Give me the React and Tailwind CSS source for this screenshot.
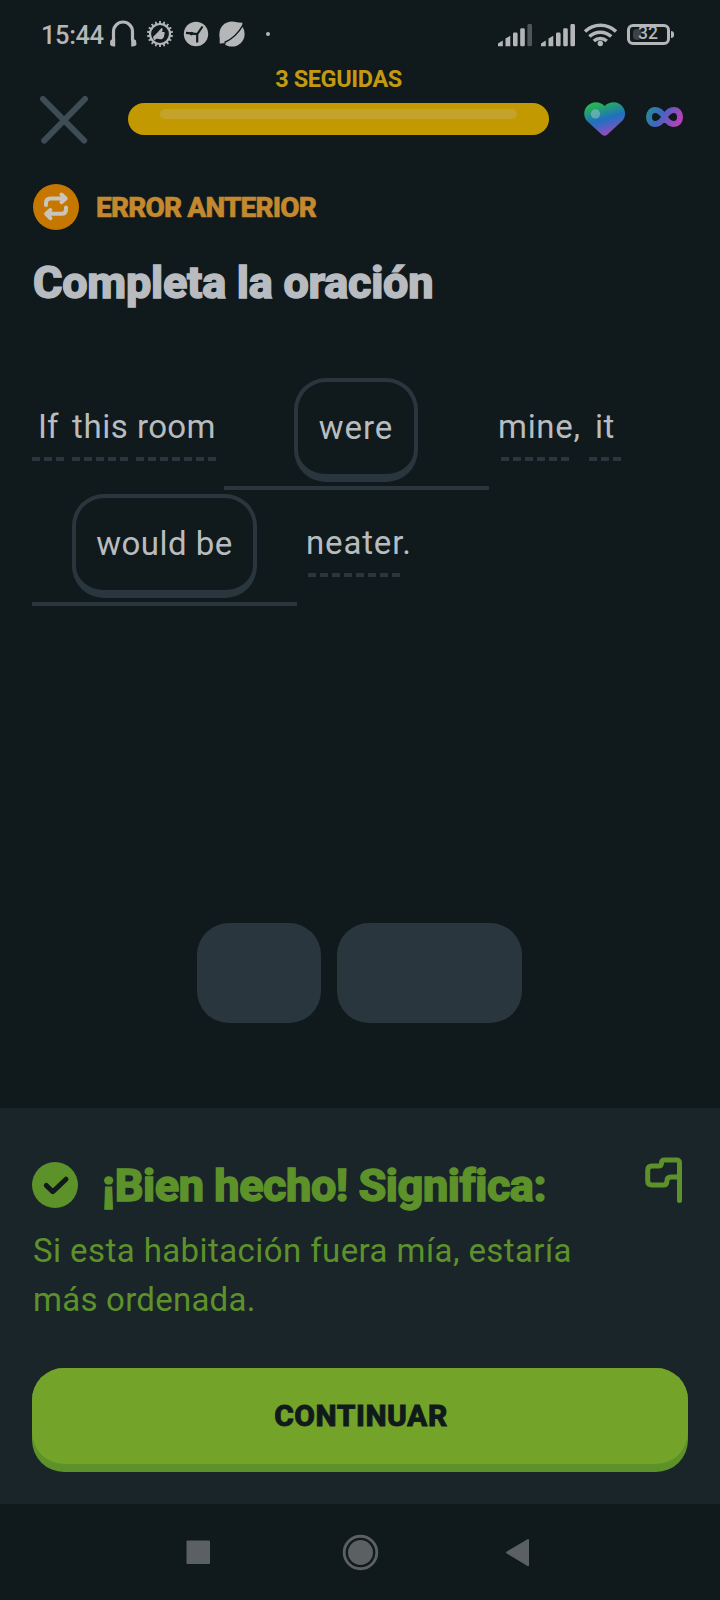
import React from 'react';

const GREY = '#b4b6b8';

function Dashes({ className }) {
  return (
    <div
      className={`h-1 bg-[repeating-linear-gradient(90deg,#2a363e_0_8px,transparent_8px_12px)] ${className}`}
    />
  );
}

function Word({ children, box, text, dashes }) {
  return (
    <div className={`flex flex-col pt-[29px] ${box}`}>
      <span className={`whitespace-nowrap text-[33px] leading-10 text-[#b8bcbf] ${text}`}>{children}</span>
      {dashes && <Dashes className={`mt-2.5 ${dashes}`} />}
    </div>
  );
}

function Slot({ children, chip }) {
  return (
    <div className="flex h-28 w-[265px] flex-col items-center border-b-4 border-[#2a363e]">
      <div className={`flex h-[104px] shrink-0 justify-center rounded-[32px] border-4 border-b-8 border-[#2a363e] pt-[26px] ${chip}`}>
        <span className="whitespace-nowrap text-[33px] leading-10 text-[#b8bcbf]">{children}</span>
      </div>
    </div>
  );
}

function Gear() {
  const teeth = Array.from({ length: 18 }, (_, i) => i * 20);
  return (
    <svg className="ml-2 size-7 shrink-0" viewBox="-14 -14 28 28">
      <circle r="10" fill="none" stroke={GREY} strokeWidth="2.2" />
      {teeth.map((a) => (
        <rect key={a} x="-0.9" y="-13" width="1.8" height="3" fill={GREY} transform={`rotate(${a})`} />
      ))}
      <path d="M-7 3 L-3 -1 L1.500 -6 Q3 -6.500 2.500 -3.500 L2 -2 H4.500 Q5 0 4.200 1 Q4.500 4 2.500 4.800 Q0 6 -3 4.500 L-6 6.500 Z" fill={GREY} />
    </svg>
  );
}

function Signal({ last, className }) {
  return (
    <svg className={`h-6 w-[35px] shrink-0 ${className}`} viewBox="0 0 35 24" fill={GREY}>
      <path d="M0 23.2V20.5L4.8 17.5V23.2Z" />
      <path d="M7.5 23.2V15.5L12.3 12.8V23.2Z" />
      <rect x="15" y="9.5" width="4.6" height="13.8" rx="1.4" />
      <rect x="22.2" y="5.3" width="4.6" height="18" rx="1.4" />
      <rect x="29.4" y="1" width="4.6" height="22.3" rx="1.4" fill={last} />
    </svg>
  );
}

function StatusBar() {
  return (
    <div className="flex h-[68px] items-center pl-[41px]">
      <span className="w-[67px] whitespace-nowrap pt-0.5 text-[25.5px] font-medium leading-7 tracking-[-0.4px] text-[#b4b6b8]">15:44</span>
      <svg className="h-7 w-[30px] shrink-0" viewBox="108 20 30 28" fill="none" stroke={GREY} strokeLinecap="round">
        <path d="M113.500 40V31.500a9.500 9.500 0 0 1 19 0V40" strokeWidth="3.2" />
        <path d="M110.300 40.500Q112 38.500 115.200 38.800V46.500Q111 47 110 44.500ZM136 40.500Q134.500 38.500 131.200 38.800V46.500Q135.500 47 136.500 44.500Z" fill={GREY} stroke="none" />
      </svg>
      <Gear />
      <svg className="ml-2 size-7 shrink-0" viewBox="-14 -14 28 28">
        <circle r="12.2" fill={GREY} />
        <path d="M-10-1.2L1.5 0.2M1 0.5L6.5-7.5M1.2 0V8.6" stroke="#10191b" strokeWidth="2.2" fill="none" />
        <circle cx="-4.5" cy="-0.4" r="1.8" fill="#10191b" />
      </svg>
      <svg className="ml-2 size-7 shrink-0" viewBox="-14 -14 28 28">
        <circle r="12.6" fill={GREY} />
        <path d="M-12.300 0V9.500H-6ZM0-12L10.500-11.300L9.500-5Z" fill={GREY} />
        <path d="M-7.500 8.500Q4 3.500 11-9" stroke="#10191b" strokeWidth="1.500" fill="none" />
        <path d="M-10.500 9.800L-6 8.800L-7.500 11.500Z" fill="#10191b" />
      </svg>
      <div className="ml-5 size-1 rounded-full bg-[#b4b6b8]" />
      <Signal last="#4f5558" className="ml-[228px] mt-0.5" />
      <Signal last={GREY} className="ml-2 mt-0.5" />
      <svg className="ml-[7px] h-7 w-[34px] shrink-0" viewBox="583 20 34 28" fill="none" stroke={GREY} strokeWidth="3.5">
        <path d="M585 31.500A22.400 22.400 0 0 1 616 31.500" />
        <path d="M589.4 36.500A15.8 15.8 0 0 1 611.2 36.500" />
        <path d="M593.8 41A9.6 9.6 0 0 1 606.8 41" />
        <circle cx="600.3" cy="43.500" r="2.7" fill={GREY} stroke="none" />
      </svg>
      <div className="ml-[10px] flex h-[21px] w-[43px] shrink-0 items-center rounded-[6px] border-[3px] border-[#b4b6b8] pl-[3px]">
        <div className="flex h-[11px] w-2 items-center rounded-sm bg-[#3c4245]">
          <span className="ml-[5px] text-[17.5px] font-medium leading-none text-[#b4b6b8]">32</span>
        </div>
      </div>
      <div className="ml-px h-[7px] w-[3px] rounded-r bg-[#b4b6b8]" />
    </div>
  );
}

function ProgressHeader() {
  return (
    <div className="flex h-[116px] pl-10">
      <svg className="mt-7 size-12 shrink-0" viewBox="0 0 48 48" stroke="#3e4c55" strokeWidth="6" strokeLinecap="round">
        <path d="M3 3L44.2 44.6M45 3L4.2 44.6" />
      </svg>
      <div className="ml-10 flex w-[421px] shrink-0 flex-col">
        <div className="flex h-[35px] items-start justify-center">
          <span className="-mt-px whitespace-nowrap text-[23.5px] font-bold leading-6 tracking-[-0.4px] text-[#c29a12]">3 SEGUIDAS</span>
        </div>
        <div className="h-8 rounded-2xl bg-[#c29900] px-8 pt-1.5">
          <div className="h-[10px] rounded-full bg-[#c5a229]" />
        </div>
      </div>
      <svg className="ml-[35px] mt-8 h-10 w-[42px] shrink-0" viewBox="584 100 42 40">
        <defs>
          <linearGradient id="heart" x1="0.3" y1="0" x2="0.65" y2="1">
            <stop offset="0.05" stopColor="#27b552" />
            <stop offset="0.5" stopColor="#2070bf" />
            <stop offset="0.62" stopColor="#3a68c0" />
            <stop offset="1" stopColor="#a846bd" />
          </linearGradient>
        </defs>
        <path d="M604.6 106C599 100 590 101.500 586 107.500C583 112.500 584 118 587.500 121.500L602 134.700Q604.600 137 607.200 134.700L621.500 121.500C625.500 118 626.300 112 623 107.300C619 101.500 610.500 100.500 604.600 106Z" fill="url(#heart)" />
        <circle cx="595.5" cy="114" r="4.7" fill="#fff" fillOpacity="0.28" />
      </svg>
      <svg className="ml-[19px] mt-[38px] h-[22px] w-10 shrink-0" viewBox="645 106 40 22" fill="none">
        <defs>
          <linearGradient id="loop" gradientUnits="userSpaceOnUse" x1="648" y1="108" x2="681" y2="124">
            <stop offset="0" stopColor="#228c95" />
            <stop offset="0.4" stopColor="#4465c2" />
            <stop offset="1" stopColor="#c63bba" />
          </linearGradient>
        </defs>
        <path d="M664.500 117C661.500 112 658.500 110 655 110C651.500 110 649 113 649 117S651.500 124 655 124C658.500 124 661.500 122 664.500 117C667.500 112 670.500 110 674 110C677.500 110 680 113 680 117S677.500 124 674 124C670.500 124 667.500 122 664.500 117Z" stroke="url(#loop)" strokeWidth="6" />
      </svg>
    </div>
  );
}

export default function App() {
  return (
    <div className="flex h-[1600px] w-[720px] flex-col overflow-hidden bg-[#10191b] font-['Roboto',sans-serif]">
      <StatusBar />
      <ProgressHeader />

      <div className="flex h-[46px] items-center pl-[33px]">
        <svg className="size-[46px] shrink-0" viewBox="33 184 46 46" fill="none">
          <circle cx="56" cy="207" r="23" fill="#c67700" />
          <g stroke="#c9c5bc" strokeWidth="4" strokeLinecap="round" strokeLinejoin="round">
            <path d="M46 205V203Q46 198.500 50.500 198.500H65M61.500 194.500L65.700 198.500L61.500 202.200" />
            <path d="M66 207.500V209.500Q66 213.800 61.500 213.800H47M50.400 210L46.200 213.800L50.400 218.200" />
          </g>
        </svg>
        <span className="ml-[17px] whitespace-nowrap pt-0.5 text-[28px] font-extrabold leading-8 tracking-[-0.83px] text-[#c4892e] [-webkit-text-stroke:0.6px_#c4892e]">ERROR ANTERIOR</span>
      </div>

      <h1 className="mt-[25px] h-14 whitespace-nowrap pl-[33px] text-[45px] font-extrabold leading-[56px] tracking-[-0.26px] text-[#b8bcc1] [-webkit-text-stroke:1.4px_#b8bcc1]">
        Completa la oración
      </h1>

      <div className="mt-[67px] flex flex-col gap-1 pl-8">
        <div className="flex h-28">
          <Word box="w-10" text="ml-[6px]" dashes="w-8">If</Word>
          <Word box="w-16" text="tracking-[0.6px]" dashes="w-14">this</Word>
          <Word box="w-[88px]" text="ml-[1px] tracking-[0.3px]" dashes="w-20">room</Word>
          <Slot chip="w-[124px] mr-px tracking-[0.9px]">were</Slot>
          <Word box="w-[100px] pl-2" text="ml-px tracking-[0.7px]" dashes="ml-1 w-[68px]">mine,</Word>
          <Word box="w-10" text="ml-[6px] tracking-[0.5px]" dashes="w-8">it</Word>
        </div>
        <div className="flex h-28">
          <Slot chip="w-[185px] tracking-[0.5px]">would be</Slot>
          <Word box="w-32 pl-2" text="ml-px tracking-[0.85px]" dashes="ml-[3px] w-[92px]">neater.</Word>
        </div>
      </div>

      <div className="mt-[317px] flex h-[100px] gap-4 pl-[197px]">
        <div className="w-[124px] rounded-[32px] bg-[#2a363e]" />
        <div className="w-[185px] rounded-[32px] bg-[#2a363e]" />
      </div>

      <div className="mt-[85px] flex h-[396px] flex-col bg-[#1a2529] px-8 pt-[49px]">
        <div className="flex h-[69px] items-start">
          <svg className="mt-[5px] size-[46px] shrink-0" viewBox="0 0 46 46">
            <circle cx="23" cy="23" r="23" fill="#5d9129" />
            <path d="M14.300 23.500L20.800 29.700L34 17.200" fill="none" stroke="#10191b" strokeWidth="5" strokeLinecap="round" strokeLinejoin="round" />
          </svg>
          <h2 className="ml-6 w-[543px] whitespace-nowrap pt-px text-[45px] font-extrabold leading-[56px] tracking-[-0.46px] text-[#5d9129] [-webkit-text-stroke:1.4px_#5d9129]">¡Bien hecho! Significa:</h2>
          <svg className="h-[46px] w-[37px] shrink-0" viewBox="645 1157 37 46" fill="none" stroke="#5d9129" strokeWidth="5" strokeLinecap="round" strokeLinejoin="round">
            <path d="M679.500 1200.500V1163Q679.500 1160 676.500 1160H664.500Q661.500 1160 661.500 1163Q661.500 1166 658.500 1166H652Q647.700 1166 647.700 1170.300V1181Q647.700 1185 652 1185H663.500Q666.800 1185 666.800 1181.500Q666.800 1177 671 1177H678" />
          </svg>
        </div>
        <p className="h-[98px] whitespace-nowrap pl-px text-[33px] leading-[49px] tracking-[0.42px] text-[#5d9129]">
          Si esta habitación fuera mía, estaría
          <br />
          <span className="tracking-[0.25px]">más ordenada.</span>
        </p>
        <button className="mt-[44px] h-[104px] w-[656px] shrink-0 rounded-[32px] bg-[#5d9129] pb-2">
          <div className="flex h-24 items-center justify-center rounded-[32px] bg-[#73a328] pb-0.5 pl-0.5 text-[30px] font-extrabold tracking-[0.5px] text-[#10191b] [-webkit-text-stroke:0.8px_#10191b]">
            CONTINUAR
          </div>
        </button>
      </div>

      <svg className="h-24 w-[720px] shrink-0" viewBox="0 1504 720 96" fill="#5b6062">
        <rect x="186.500" y="1540.500" width="23.500" height="23.500" rx="1" />
        <circle cx="360.500" cy="1552.500" r="12.500" />
        <circle cx="360.500" cy="1552.500" r="16.300" fill="none" stroke="#5b6062" strokeWidth="2.900" />
        <path d="M507 1552.500L528 1540V1565.200Z" stroke="#5b6062" strokeWidth="2" strokeLinejoin="round" />
      </svg>
    </div>
  );
}
